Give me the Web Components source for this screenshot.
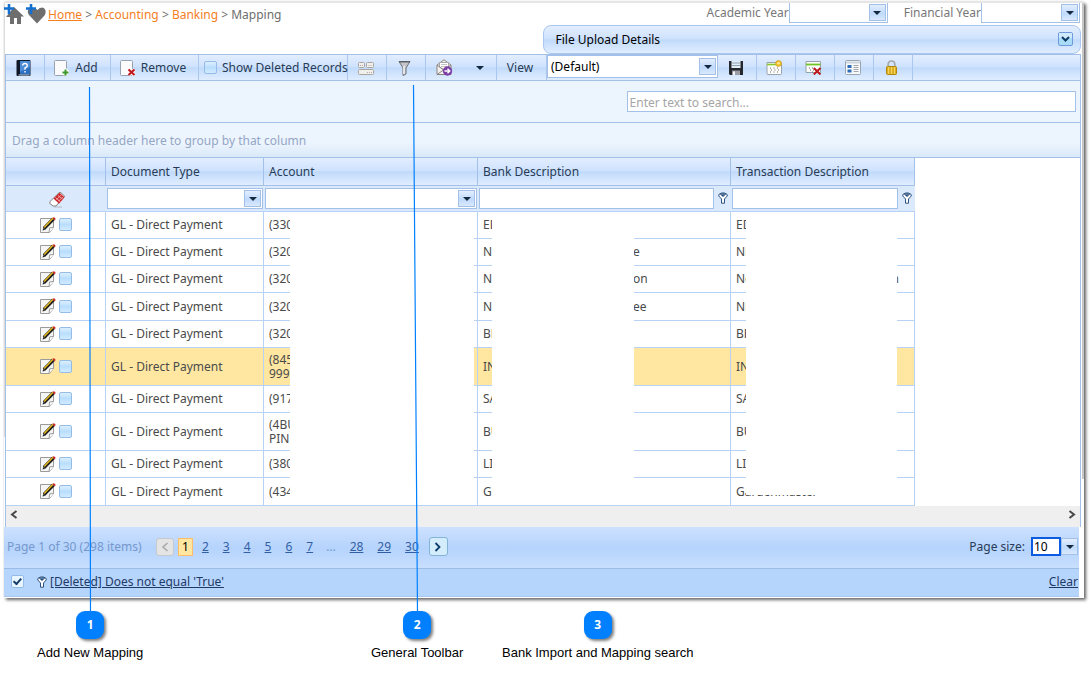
<!DOCTYPE html>
<html lang="en">
<head>
<meta charset="utf-8">
<title>Mapping</title>
<style>
  body { margin: 0; background: #fff; font: 12px/14px "Noto Sans", Tahoma, sans-serif; color: #283b56;
    --line: #a3c0e8; --bar: linear-gradient(#e3eeff 0%, #cfe2fd 46%, #c0dafb 52%, #c8dffc 62%, #e0edff 100%); }
</style>
</head>
<body>
<mapping-page></mapping-page>

<script>
const ICONS = {
  home: [20, 20, '<path d="M10 3 20 12.500h-3V20h-4v-6h-3v6H6v-7H2z" fill="#6e6e6e"/><path d="M0 4.500h10M5 0v10" stroke="#1470cf" stroke-width="2.600"/>'],
  heart: [20, 20, '<path d="M11 19.500 3 11C0 7 3 3 7 4q3 0 4.500 2Q13 3.500 16 3.500c4 .5 4.500 5 2.500 8z" fill="#6e6e6e"/><path d="M0 4.500h10M5 0v10" stroke="#1470cf" stroke-width="2.600"/>'],
  help: [15, 16, '<rect x=".5" y="0" width="14" height="16" rx="1" fill="#101828"/><path d="M4 1h10v13.500H4z" fill="#2f6fc0"/><path d="M4 1h10v6L4 12z" fill="#4d8cd8"/><path d="M2.500 15h11" stroke="#cdd7e4"/><path d="M6.600 5.500Q6.800 3.500 9 3.500t2.300 2Q11.300 7 9 8v1.800M9 11v1.600" fill="none" stroke="#fff" stroke-width="1.400"/>'],
  add: [16, 16, '<rect x=".5" y=".5" width="12" height="15" rx="1" fill="#fbfbfb" stroke="#96a2b2"/><path d="M8 12h7M11.500 8.500v7" stroke="#fff" stroke-width="4"/><path d="M8.500 12.500h6M11.500 9.500v6" stroke="#3c9a2c" stroke-width="2"/>'],
  remove: [16, 16, '<rect x=".5" y=".5" width="12" height="15" rx="1" fill="#fbfbfb" stroke="#96a2b2"/><path d="m8.500 9.500 6 5.500m0-5.500-6 5.500" stroke="#fff" stroke-width="3.600"/><path d="m8.500 9.500 6 5.500m0-5.500-6 5.500" stroke="#c01a1e" stroke-width="2.200"/>'],
  cards: [16, 14, '<g fill="#f1efec" stroke="#aaa6a4"><rect x=".5" y="1.500" width="6" height="5" rx="1"/><rect x="8.500" y="1.500" width="7" height="5" rx="1"/><rect x=".5" y="8.500" width="15" height="5" rx="1"/></g><path d="M2 4.500h3M10.500 4.500h3.500M9 11.500h5" stroke="#b0acaa" stroke-dasharray="1 1"/>'],
  funnel: [13, 16, '<path d="M1 1.500h11L8 8v6l-3 1.500V8z" fill="#c4c6c9" stroke="#6f7379"/><path d="M1 1h11v1.500H1z" fill="#5c6066"/><path d="M6 6v8" stroke="#f4f4f4" stroke-width="1.500"/>'],
  mail: [17, 17, '<path d="M1 6 8 .8 15 6v9.500H1z" fill="#f3f2f0" stroke="#8b8580"/><path d="M3.500 3.500h9V8L8 10.500 3.500 8z" fill="#fff" stroke="#aaa"/><path d="M5 5.500h6M5 7.500h6" stroke="#c4c4c4"/><path d="m1 6 6.500 5L1 15.500M15 6l-7 5" fill="none" stroke="#8b8580"/><circle cx="11.500" cy="12" r="4.700" fill="#7c3fa6"/><path d="M8.500 12h5m-2-2.300 2.300 2.300-2.300 2.300" fill="none" stroke="#fff" stroke-width="1.400"/>'],
  down: [8, 4, '<path d="M0 0h8L4 4z" fill="#14293f"/>'],
  save: [14, 14, '<path d="M0 0h14v14H1l-1-1z" fill="#25282d"/><path d="M2.500 0h9v7h-9z" fill="#e6eef5"/><path d="M3 2h8M3 4.500h8" stroke="#8aa0b4"/><path d="M3 9.500h8V14H3z" fill="#9b9fa5"/><path d="M4 10.500h2V14H4z" fill="#f4f5f6"/>'],
  newview: [17, 15, '<path d="M1 2.500h14.500v11q0 1-1 1H2q-1 0-1-1z" fill="#fdfdfb" stroke="#98a2ac"/><path d="M1 4.500h14.500" stroke="#85c92b" stroke-width="1.600"/><path d="M4 8h9M5 10h9M4 12h9" stroke="#6d6d6d" stroke-dasharray="1 2.500"/><circle cx="12.500" cy="3.500" r="3" fill="#f2bd27" stroke="#cf9b2b" stroke-width=".6"/><circle cx="12.500" cy="3.200" r="1.300" fill="#ffec90"/>'],
  delview: [17, 15, '<path d="M1 1.500h14.500v11H1z" fill="#fdfdfb" stroke="#98a2ac"/><path d="M1 4.500h14.500" stroke="#6fc522" stroke-width="1.800"/><path d="M4 8h6M5 10h4M7 12h2" stroke="#6d6d6d" stroke-dasharray="1 2"/><path d="m8.800 8 6.700 6.500m0-6.500-6.700 6.500" stroke="#bb171d" stroke-width="2"/>'],
  list: [16, 15, '<rect x=".5" y=".5" width="15" height="14" rx="1" fill="#f8f9fa" stroke="#9aa4b2"/><path d="M1 2.500h14" stroke="#ccd5df" stroke-width="2"/><path d="M2.500 5h4v3h-4zM2.500 9.500h4v3h-4z" fill="#2d6db8"/><path d="M8.500 5.500h5M8.500 7.500h5M8.500 9.500h5M8.500 11.500h5" stroke="#a3a7ac"/>'],
  lock: [11, 15, '<path d="M2.200 7V4Q2.500 1 5.500 1t3.300 3v3" fill="none" stroke="#a6a8aa" stroke-width="1.700"/><rect x=".5" y="6.500" width="10" height="8" rx="1" fill="#dcae22" stroke="#b08510"/><path d="M2.500 7v7M5.500 7v7M8.500 7v7" stroke="#f6d65f"/>'],
  eraser: [17, 16, '<path d="m1 9.500 9-8.700q1-.8 2 0l3.700 3.400-8.700 9.800H4L.8 11.500z" fill="#fff" stroke="#85807d"/><path d="m4.500 6.500 6-5.700 5 4.500-5.500 6.400z" fill="#cf262b"/><path d="m7.500 7.700 4.500-4.500M9.500 9.300l4.500-4.500M6.500 5.500l5 4.500M9 3.500l4.500 3.500" stroke="#f2c7c7" stroke-width=".8"/><path d="M5 15h8" stroke="#a5a8ac" opacity=".7"/>'],
  edit: [16, 16, '<path d="M.5 1.500h13v9l-4 5h-9z" fill="#f5f5f3" stroke="#9b9b9b"/><path d="m9 15.500.7-4.700 4-.3" fill="#fff" stroke="#9b9b9b"/><path d="m4 11.500 9.300-9.500" stroke="#1d1d1d" stroke-width="3.400"/><path d="m4.200 10.400 8.800-9.200" stroke="#e2b51e" stroke-width="1.500"/><path d="m12.300.8 1.900-.5 1.500 1.400-.9 1.700z" fill="#cc2a2a"/><path d="m2.500 13.500.8-2.500 1.900 1.700z" fill="#222"/>'],
  filter: [10, 12, '<path d="M.8 2.500Q5-.8 9.200 2.500V4L6.500 7v4.200h-3V7L.8 4z" fill="#fff" stroke="#2f5380"/><path d="M2.500 2.800h5L5 5z" fill="#2f5380"/><path d="M2 2h6" stroke="#2f5380" stroke-width="1.400"/>'],
  prev: [8, 10, '<path d="M6.500 1 2 5l4.500 4" fill="none" stroke="#a9a9a9" stroke-width="1.600"/>'],
  next: [8, 10, '<path d="m1.500 1 4 4-4 4" fill="none" stroke="#0d3f6e" stroke-width="1.800"/>'],
  scrollleft: [8, 9, '<path d="M6.500 1 2 4.500 6.500 8" fill="none" stroke="#484848" stroke-width="2"/>'],
  scrollright: [8, 9, '<path d="M1.500 1 6 4.500 1.500 8" fill="none" stroke="#484848" stroke-width="2"/>'],
  expand: [15, 14, '<rect x=".5" y=".5" width="14" height="13" rx="1.500" fill="#a9dcf7" stroke="#7098df"/><path d="M1 1h13v5H1z" fill="#cfeafb"/><path d="m4 5 3.500 3.500L11 5" fill="none" stroke="#113a63" stroke-width="2"/>']
};

function define(name, css, html, setup) {
  const template = document.createElement('template');
  template.innerHTML = '<style>*{box-sizing:border-box}button,input,select{font:inherit;color:inherit;margin:0}' + css + '</style>' + html;
  customElements.define(name, class extends HTMLElement {
    constructor() {
      super();
      this.attachShadow({ mode: 'open' }).append(template.content.cloneNode(true));
    }
    connectedCallback() { if (setup) setup(this, this.shadowRoot); }
  });
}

define('ui-icon', ':host{display:inline-flex;flex:none}svg{display:block}', '', (host, root) => {
  const [w, h, shape] = ICONS[host.getAttribute('name')];
  root.innerHTML += `<svg width="${w}" height="${h}" viewBox="0 0 ${w} ${h}" aria-hidden="true">${shape}</svg>`;
});

define('check-box', `
  :host{display:inline-flex;flex:none}
  input{appearance:none;display:grid;place-items:center;width:13px;height:13px;border:1px solid #95bce8;border-radius:2px;background:linear-gradient(#dcefff,#b9defd 50%,#d2ebff)}
  input:checked{background:#eaf6ff}
  input:checked::before{content:"";width:3px;height:6px;border:solid #123d68;border-width:0 2px 2px 0;transform:rotate(42deg) translate(-1px,-1px)}`,
  '<input type="checkbox">', (host, root) => {
    const box = root.querySelector('input');
    box.checked = host.hasAttribute('checked');
    box.setAttribute('aria-label', host.getAttribute('label'));
  });

define('combo-box', `
  :host{display:flex;min-width:0;height:21px}
  div{display:flex;flex:1;min-width:0;align-items:center;border:1px solid var(--line);border-top-width:var(--combo-top,1px);background:#fff;padding:1px}
  select{appearance:none;flex:1;min-width:0;height:100%;border:0;padding:0 2px;background:#fff;color:#000}
  span{display:grid;place-items:center;width:17px;height:17px;border:1px solid #a3c0e8;background:linear-gradient(#e3eeff,#c0dafb 55%,#d9e9ff)}`,
  '<div><select></select><span><ui-icon name="down"></ui-icon></span></div>', (host, root) => {
    const select = root.querySelector('select');
    select.setAttribute('aria-label', host.getAttribute('label'));
    select.add(new Option(host.getAttribute('value') || ''));
  });

define('page-head', `
  :host{display:grid;grid-template-columns:1fr auto;grid-template-rows:22px 29px;align-items:start}
  nav{display:flex;align-items:center;height:22px;gap:2px;color:#6e6e6e;white-space:pre}
  .crumbs{padding-top:2px}
  a{color:#f5801f;text-decoration:none} a.home{text-decoration:underline}
  .years{display:grid;grid-template-columns:auto 99px auto 99px;height:20px;align-items:center;color:#777;--combo-top:0px;padding-right:1px}
  .years combo-box{height:20px}
  .years label+combo-box+label{padding-left:16px}
  .upload{grid-column:1/-1;justify-self:end;display:flex;align-items:center;justify-content:space-between;width:50%;height:29px;padding:0 7px 0 12px;border:1px solid #a9c7f0;border-radius:8px;background:var(--bar);color:#000}
  button{border:0;background:none;padding:0 0 2px;display:flex}`,
  `<nav aria-label="Breadcrumb"><ui-icon name="home"></ui-icon><ui-icon name="heart"></ui-icon><span class="crumbs"><a class="home" href="#">Home</a> &gt; <a href="#">Accounting</a> &gt; <a href="#">Banking</a> &gt; Mapping</span></nav>
   <div class="years"><label>Academic Year</label><combo-box label="Academic Year"></combo-box><label>Financial Year</label><combo-box label="Financial Year"></combo-box></div>
   <div class="upload"><span>File Upload Details</span><button aria-label="Expand File Upload Details"><ui-icon name="expand"></ui-icon></button></div>`);

define('tool-item', `
  :host{display:flex;flex:none;width:39px;border-right:1px solid #a9c7ef}
  button{flex:1;display:flex;align-items:center;justify-content:center;gap:5px;border:0;padding:0 3px 0 0;background:none;white-space:nowrap}`,
  '<button><slot></slot></button>', (host, root) => root.querySelector('button').setAttribute('aria-label', host.getAttribute('label') || host.textContent));

define('tool-bar', `
  :host{display:flex;height:27px;border:solid var(--line);border-width:1px 0;background:var(--bar)}
  .add{width:66px}.remove{width:88px}.mail{width:71px}.view{width:50px}
  .arrow{padding-left:18px}
  label{display:flex;flex:none;align-items:center;gap:5px;width:149px;padding-left:5px;border-right:1px solid #a9c7ef;white-space:nowrap}
  combo-box{flex:none;width:171px;height:23px}`,
  `<tool-item label="Help"><ui-icon name="help"></ui-icon></tool-item>
   <tool-item class="add"><ui-icon name="add"></ui-icon>Add</tool-item>
   <tool-item class="remove"><ui-icon name="remove"></ui-icon>Remove</tool-item>
   <label><check-box label="Show Deleted Records"></check-box>Show Deleted Records</label>
   <tool-item label="Cards"><ui-icon name="cards"></ui-icon></tool-item>
   <tool-item label="Filter"><ui-icon name="funnel"></ui-icon></tool-item>
   <tool-item class="mail" label="Send"><ui-icon name="mail"></ui-icon><ui-icon class="arrow" name="down"></ui-icon></tool-item>
   <tool-item class="view">View</tool-item>
   <combo-box label="View" value="(Default)"></combo-box>
   <tool-item label="Save view"><ui-icon name="save"></ui-icon></tool-item>
   <tool-item label="New view"><ui-icon name="newview"></ui-icon></tool-item>
   <tool-item label="Delete view"><ui-icon name="delview"></ui-icon></tool-item>
   <tool-item label="Columns"><ui-icon name="list"></ui-icon></tool-item>
   <tool-item label="Lock"><ui-icon name="lock"></ui-icon></tool-item>`);

define('search-panel', `
  :host{display:flex;justify-content:flex-end;height:42px;padding:10px 4px 0 0;background:#ecf4fe;border-bottom:1px solid var(--line)}
  input{width:42%;height:21px;border:1px solid var(--line);background:#fff;padding:2px 2px 0;outline:0}
  input::placeholder{color:#a5a5a5;opacity:1}`,
  '<input type="search" aria-label="Search" placeholder="Enter text to search...">');

define('group-panel', `
  :host{display:flex;align-items:center;height:35px;padding:2px 0 0 6px;color:#94a6c5;background:linear-gradient(#ecf4fe 60%,#d9e9f8);border-bottom:1px solid var(--line)}`,
  'Drag a column header here to group by that column');

const ROWS = [
  ['(330', 'ED', '', 'ED', ''],
  ['(320', 'NE', 'e', 'NE', ''],
  ['(320', 'Ne', 'on', 'Ne', 'n'],
  ['(320', 'NE', 'ee', 'NE', ''],
  ['(320', 'BR', '', 'BR', ''],
  ['(845<br>999', 'IN', '', 'IN', ''],
  ['(917', 'SA', '', 'SA', ''],
  ['(4BU<br>PINE', 'BU', '', 'BU', ''],
  ['(380', 'LI', '', 'LI', ''],
  ['(434', 'Ga', '', 'Gardenmaster', '']
];

define('data-grid', `
  :host{display:block;overflow:hidden;background:#fff}
  table{table-layout:fixed;width:909px;border-collapse:separate;border-spacing:0}
  th,td{padding:0;text-align:left;font-weight:400;border-right:1px solid #b7d2f4;border-bottom:1px solid #b7d2f4}
  .head th{height:28px;padding-left:5px;background:var(--bar);border-color:var(--line)}
  .filters td{height:26px;background:#dbe9fd;border-right:0;padding:0 1px}
  .filters .clear{text-align:center}
  .clear button{border:0;background:none;padding:5px 0 0 2px;display:inline-flex}
  .field{display:flex;align-items:center}
  .field input{flex:1;min-width:0;height:21px;border:1px solid var(--line);background:#fff;padding:0 2px}
  .field ui-icon{padding:0 2px 2px 4px}
  tbody td{position:relative;height:27px;color:#4a4a4a}
  tbody tr:nth-child(4) td,tbody tr:last-child td{height:28px}
  tbody tr.tall td{height:38px}
  tr.current td{background:#ffe7a2}
  td.type{padding-left:5px}
  .tools{display:flex;justify-content:center;align-items:center;gap:3px;padding:0 0 1px 1px}
  .text{display:flex;padding-left:5px;white-space:nowrap}
  .lead{flex:none;width:9px}
  .bank .tail{margin-left:141px}
  .trans .tail{margin-left:151px;width:3px;overflow:hidden;direction:rtl}
  i{position:absolute;top:0;bottom:-1px;z-index:1;background:#fff}
  .account i{left:26px;width:184px}.bank i{left:14px;width:142px}.trans i{left:15px;width:151px}
  tr:last-child i{bottom:0}
  tr:last-child .trans i{bottom:10px}`,
  `<table>
    <colgroup><col style="width:100px"><col style="width:158px"><col style="width:214px"><col style="width:253px"><col style="width:184px"></colgroup>
    <thead>
      <tr class="head"><th></th><th>Document Type</th><th>Account</th><th>Bank Description</th><th>Transaction Description</th></tr>
      <tr class="filters"><td class="clear"><button aria-label="Clear filters"><ui-icon name="eraser"></ui-icon></button></td>
        <td><combo-box label="Document Type filter"></combo-box></td><td><combo-box label="Account filter"></combo-box></td>
        <td><div class="field"><input type="text" aria-label="Bank Description filter"><ui-icon name="filter"></ui-icon></div></td>
        <td><div class="field"><input type="text" aria-label="Transaction Description filter"><ui-icon name="filter"></ui-icon></div></td></tr>
    </thead>
    <tbody></tbody>
  </table>`, (host, root) => {
    root.querySelector('tbody').innerHTML = ROWS.map(([account, bank, bankTail, trans, transTail], n) => `
      <tr class="${account.includes('<br>') ? 'tall' : ''} ${n === 5 ? 'current' : ''}">
        <td><div class="tools"><ui-icon name="edit"></ui-icon><check-box label="Select row"></check-box></div></td>
        <td class="type">GL - Direct Payment</td>
        <td class="account"><div class="text"><span class="lead">${account}</span></div><i></i></td>
        <td class="bank"><div class="text"><span class="lead">${bank}</span><span class="tail">${bankTail}</span></div><i></i></td>
        <td class="trans"><div class="text"><span class="lead">${trans}</span><span class="tail">${transTail}</span></div><i></i></td>
      </tr>`).join('');
  });

define('scroll-strip', `
  :host{display:flex;justify-content:space-between;height:21px;padding:0 4px;background:#efefef}
  button{border:0;background:none;padding:0 0 4px;display:flex;align-items:center}`,
  '<button aria-label="Scroll left"><ui-icon name="scrollleft"></ui-icon></button><button aria-label="Scroll right"><ui-icon name="scrollright"></ui-icon></button>');

define('pager-bar', `
  :host{display:flex;align-items:center;height:42px;padding:0 0 2px 3px;border-bottom:1px solid #9cbce8;background:linear-gradient(#cde1ff,#b5d3fc 52%,#c8dffe)}
  .summary{color:#7598ce;width:149px}
  a,b,.gap{padding:0 7px;color:#325ea5}
  .gap{color:#7598ce;padding:0 7px 0 6px}
  b{font-weight:400;color:#000;padding:1px 3px;border:1px solid #ffbd69;background:#ffe7a2;margin:0 2px 0 4px}
  button{width:18px;height:18px;display:grid;place-items:center;padding:0;border:1px solid #c6c9cd;border-radius:3px;background:#e4e4e4}
  button.next{width:19px;height:19px;border-color:#83b3d6;background:#d4edfd;margin-left:3px}
  label{margin-left:auto;padding-right:6px}
  .size{display:flex;align-items:center;padding-right:1px}
  input{width:30px;height:19px;border:2px solid #0b5ce0;padding:0 1px;background:#fff;color:#000;outline:0}
  .size button{width:17px;height:17px;border-color:#a3c0e8;border-radius:0;background:linear-gradient(#e3eeff,#c0dafb 55%,#d9e9ff)}`,
  `<span class="summary">Page 1 of 30 (298 items)</span><button disabled aria-label="Previous page"><ui-icon name="prev"></ui-icon></button><b>1</b><a href="#">2</a><a href="#">3</a><a href="#">4</a><a href="#">5</a><a href="#">6</a><a href="#">7</a><span class="gap">…</span><a href="#">28</a><a href="#">29</a><a href="#">30</a><button class="next" aria-label="Next page"><ui-icon name="next"></ui-icon></button>
   <label for="size">Page size:</label><span class="size"><input id="size" type="text" value="10"><button aria-label="Choose page size"><ui-icon name="down"></ui-icon></button></span>`);

define('filter-bar', `
  :host{display:flex;align-items:center;height:28px;padding:0 1px 2px 7px;background:#b6d5fd;border-bottom:1px solid #a9c7ef}
  a{color:#1f3a66} .clear{margin-left:auto}
  ui-icon{padding:0 3px 0 13px}`,
  `<check-box checked label="Filter enabled"></check-box><ui-icon name="filter"></ui-icon><a href="#">[Deleted] Does not equal 'True'</a><a class="clear" href="#">Clear</a>`);

define('call-out', `
  :host{display:grid;justify-items:center;gap:6px;color:#000;font:13px/15px "Liberation Sans",Arial,sans-serif;white-space:nowrap}
  b{display:grid;place-items:center;width:28px;height:28px;border-radius:9px;background:#0080ff;color:#fff;box-shadow:2px 2px 3px rgba(0,0,0,.5);font:bold 12px/14px "Noto Sans",sans-serif}`,
  '<b><slot name="number"></slot></b><slot></slot>');

define('mapping-page', `
  :host{display:block;position:relative}
  main{display:block;margin:2px 8px 0 4px;padding-right:3px;border-top:1px solid #e6e6e6;box-shadow:2px 2px 3px rgba(0,0,0,.6),0 -1px 2px rgba(0,0,0,.1);
    background:linear-gradient(#c6c6c6,#c6c6c6) right top/2px 80% no-repeat,linear-gradient(#dcdcdc,#dcdcdc) left top/1px 73% no-repeat,#fff}
  .grid{border:solid var(--line);border-width:0 1px;margin-left:1px}
  .foot{margin-right:2px;padding-bottom:1px}
  .notes{display:grid;grid-template-columns:37px 105px 229px 90px 41px 191px;padding-top:13px}
  .notes call-out:nth-child(1){grid-column:2}.notes call-out:nth-child(2){grid-column:4}.notes call-out:nth-child(3){grid-column:6}
  .lines{position:absolute;left:0;top:0;z-index:2;pointer-events:none}`,
  `<main>
    <page-head></page-head>
    <div class="grid">
      <tool-bar></tool-bar><search-panel></search-panel><group-panel></group-panel>
      <data-grid></data-grid><scroll-strip></scroll-strip>
    </div>
    <div class="foot"><pager-bar></pager-bar><filter-bar></filter-bar></div>
  </main>
  <div class="notes">
    <call-out><span slot="number">1</span>Add New Mapping</call-out>
    <call-out><span slot="number">2</span>General Toolbar</call-out>
    <call-out><span slot="number">3</span>Bank Import and Mapping search</call-out>
  </div>
  <svg class="lines" width="430" height="612" aria-hidden="true"><path d="M89.500 85l1 526M413.500 83l4 528" fill="none" stroke="#0080ff" stroke-width="1.200"/></svg>`);
</script>
</body>
</html>
